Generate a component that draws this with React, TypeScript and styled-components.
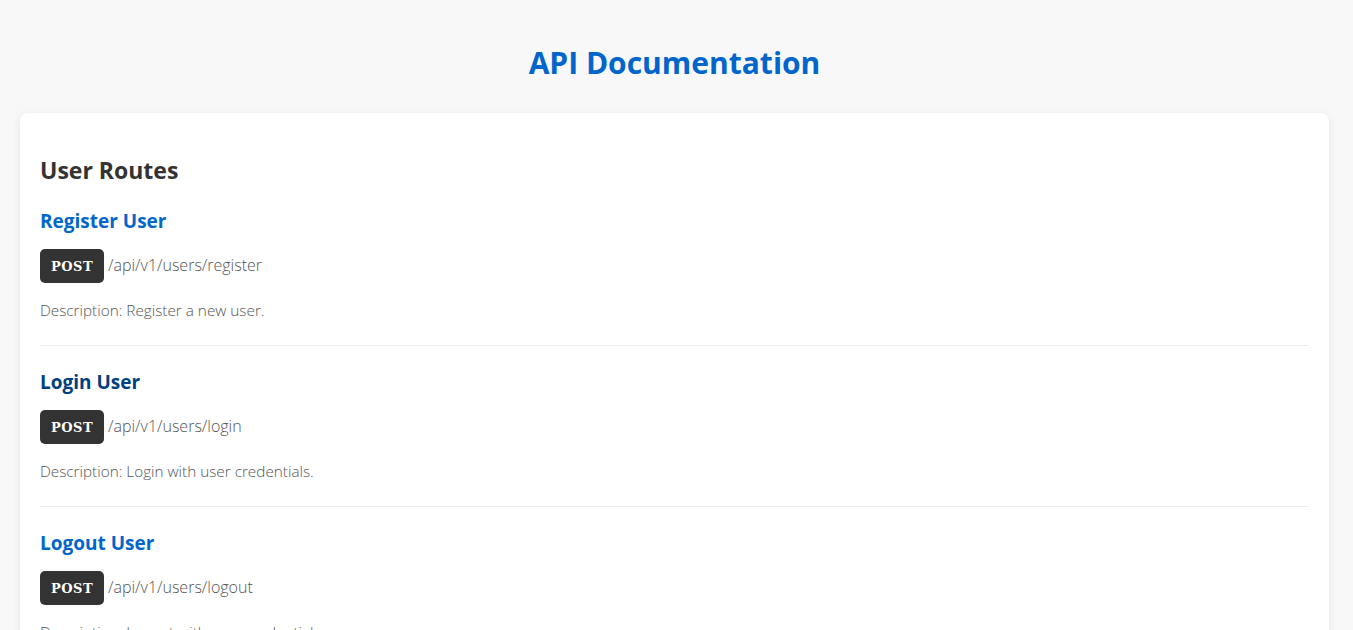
import React from "react";
import styled, { createGlobalStyle } from "styled-components";

const GlobalStyle = createGlobalStyle`
  html, body { margin: 0; padding: 0; }
  body {
    background: #f8f8f8;
    font-family: "Open Sans", "Noto Sans", sans-serif;
    color: #333;
  }
`;

const Page = styled.div`
  padding: 0 24px 20px 20px;
`;

const Title = styled.h1`
  margin: 0;
  padding: 40px 0 27px;
  text-align: center;
  font-size: 30px;
  font-weight: 700;
  color: #0066cc;
  line-height: 46px;
`;

const Card = styled.section`
  background: #fff;
  border-radius: 8px;
  box-shadow: 0 2px 10px rgba(0, 0, 0, 0.08);
  padding: 40px 20px 20px;
`;

const SectionTitle = styled.h2`
  margin: 0 0 20px;
  font-size: 23px;
  font-weight: 700;
  color: #333;
  line-height: 34px;
`;

const Route = styled.div`
  padding: 0 0 22px;
  margin-bottom: 22px;
  border-bottom: 1px solid #eee;
`;

const RouteTitle = styled.h3<{ $active?: boolean }>`
  margin: 0 0 14px;
  font-size: 19px;
  font-weight: 700;
  line-height: 28px;
  color: ${(p) => (p.$active ? "#003f80" : "#0066cc")};
`;

const Endpoint = styled.div`
  display: flex;
  align-items: center;
  gap: 4px;
  margin-bottom: 14px;
`;

const Method = styled.span`
  display: inline-flex;
  align-items: center;
  justify-content: center;
  width: 64px;
  height: 34px;
  box-sizing: border-box;
  border-radius: 5px;
  background: #333;
  color: #fff;
  font-family: "DejaVu Serif", "Liberation Serif", serif;
  font-weight: 700;
  font-size: 13px;
  letter-spacing: 0.5px;
`;

const Path = styled.span`
  font-size: 16px;
  font-weight: 300;
  color: #555;
  margin-top: -2px;
`;

const Description = styled.p`
  margin: 0;
  font-size: 15.3px;
  font-weight: 300;
  color: #555;
  line-height: 26px;
`;

const routes = [
  { title: "Register User", path: "/api/v1/users/register", desc: "Register a new user." },
  { title: "Login User", path: "/api/v1/users/login", desc: "Login with user credentials.", active: true },
  { title: "Logout User", path: "/api/v1/users/logout", desc: "Logout with user credentials." },
  { title: "Get User Profile", path: "/api/v1/users/profile", desc: "Get the profile of the logged in user." },
];

export default function App() {
  return (
    <>
      <GlobalStyle />
      <Page>
        <Title>API Documentation</Title>
        <Card>
          <SectionTitle>User Routes</SectionTitle>
          {routes.map((r) => (
            <Route key={r.title}>
              <RouteTitle $active={r.active}>{r.title}</RouteTitle>
              <Endpoint>
                <Method>POST</Method>
                <Path>{r.path}</Path>
              </Endpoint>
              <Description>Description: {r.desc}</Description>
            </Route>
          ))}
        </Card>
      </Page>
    </>
  );
}
